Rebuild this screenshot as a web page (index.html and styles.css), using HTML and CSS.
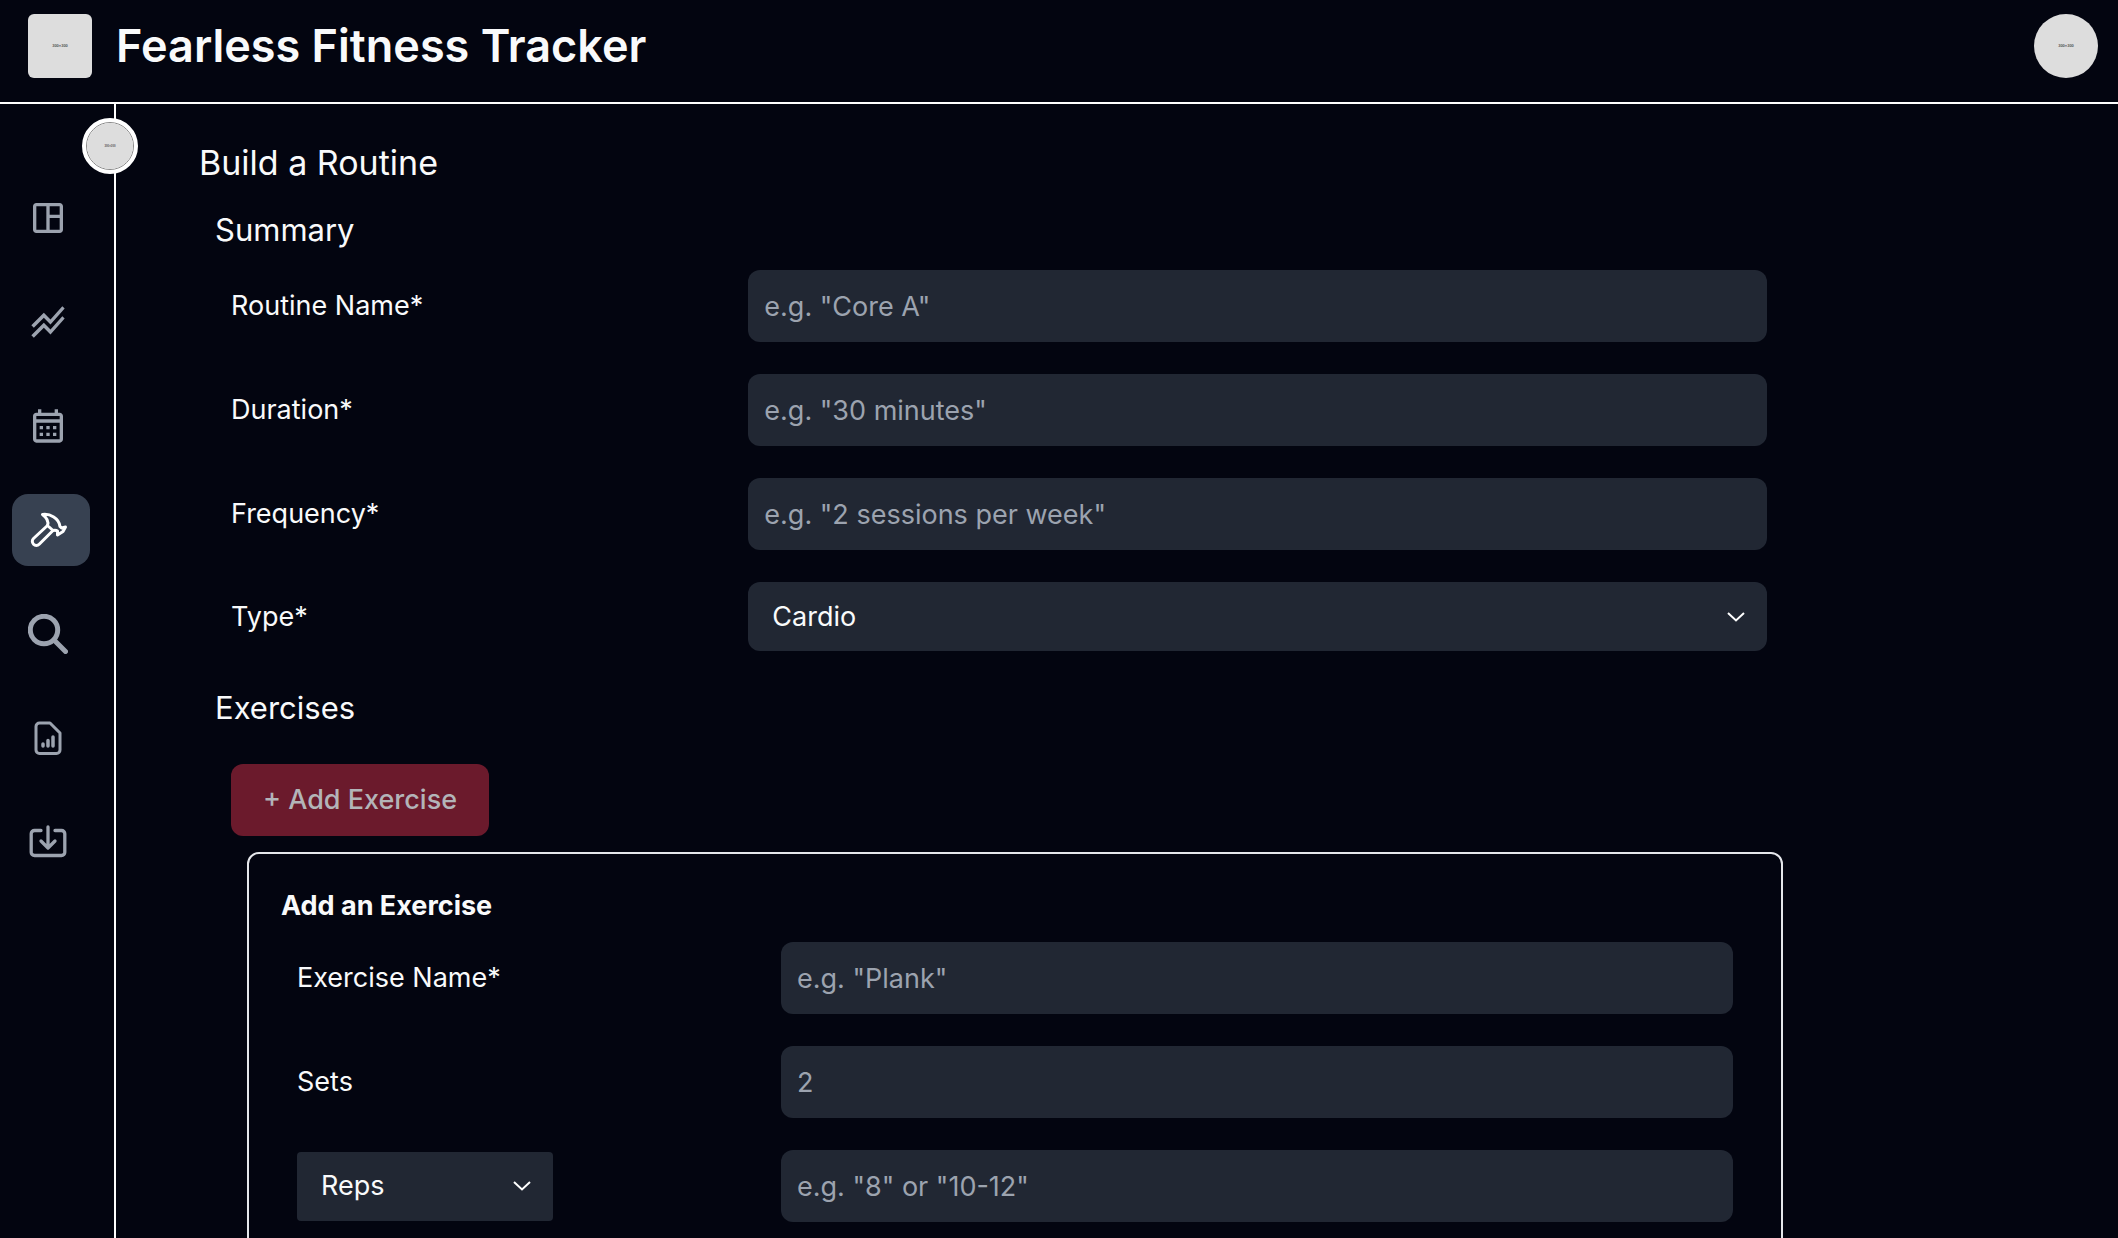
FILE: index.html
```html
<!DOCTYPE html>
<html lang="en">
<head>
<meta charset="utf-8">
<meta name="viewport" content="width=device-width, initial-scale=1">
<title>Fearless Fitness Tracker</title>
<link rel="stylesheet" href="styles.css">
</head>
<body>
<div class="app">
  <header class="header">
    <div class="brand">
      <svg class="thumb thumb-square" viewBox="0 0 64 64" aria-hidden="true"><rect width="64" height="64" fill="#ddd"/><text x="32" y="33" class="thumb-text">300×300</text></svg>
      <h1 class="brand-name">Fearless Fitness Tracker</h1>
    </div>
    <button class="avatar" type="button" aria-label="Account">
      <svg class="thumb thumb-round" viewBox="0 0 64 64" aria-hidden="true"><rect width="64" height="64" fill="#ddd"/><text x="32" y="33" class="thumb-text">300×300</text></svg>
    </button>
  </header>
  <div class="body">
    <aside class="sidebar">
      <button class="toggle" type="button" aria-label="Expand sidebar">
        <svg class="toggle-image" viewBox="0 0 64 64" aria-hidden="true"><rect width="64" height="64" fill="#ddd"/><text x="32" y="33" class="thumb-text">300×300</text></svg>
      </button>
      <nav class="nav">
        <a class="nav-item" href="#" aria-label="Dashboard"><svg class="icon" viewBox="0 0 24 24" fill="currentColor"><path d="M19 3H5c-1.100 0-2 .9-2 2v14c0 1.100.9 2 2 2h14c1.100 0 2-.9 2-2V5c0-1.100-.9-2-2-2zM5 19V5h6v14H5zm14 0h-6v-7h6v7zm0-9h-6V5h6v5z"/></svg></a>
        <a class="nav-item" href="#" aria-label="Progress"><svg class="icon" viewBox="0 0 24 24" fill="currentColor"><path d="M2 19.990l7.500-7.510 4 4 7.090-7.970L22 9.920l-8.500 9.560-4-4-6 6.010L2 19.990zm1.500-4.500l6-6.010 4 4L22 3.920l-1.410-1.410-7.090 7.970-4-4L2 13.990l1.500 1.500z"/></svg></a>
        <a class="nav-item" href="#" aria-label="Calendar"><svg class="icon" viewBox="0 0 24 24" fill="currentColor"><path d="M19 4h-1V2h-2v2H8V2H6v2H5c-1.110 0-1.990.9-1.990 2L3 20c0 1.100.89 2 2 2h14c1.100 0 2-.9 2-2V6c0-1.100-.9-2-2-2zm0 16H5V10h14v10zm0-12H5V6h14v2zM9 14H7v-2h2v2zm4 0h-2v-2h2v2zm4 0h-2v-2h2v2zm-8 4H7v-2h2v2zm4 0h-2v-2h2v2zm4 0h-2v-2h2v2z"/></svg></a>
        <a class="nav-item nav-item-active" href="#" aria-label="Build" aria-current="page"><svg class="icon" viewBox="0 0 40 40" fill="none" stroke="currentColor" stroke-width="3" stroke-linejoin="round" stroke-linecap="round"><path d="M19.500 15.500 5.500 28.500a4 4 0 0 0 5.700 5.700L25 20.500"/><path d="M14.500 4.500C22 3.500 31 8 32 16.500l1.500 1.500 4-1-2.500 4.500-5.500 3.500v-4c-1.500-1-3-.8-4.500-.5l-5.500-5c1.500-4.500-1-8-5-11z"/></svg></a>
        <a class="nav-item" href="#" aria-label="Search"><svg class="icon" viewBox="0 0 40 40" fill="none" stroke="currentColor" stroke-width="5" stroke-linecap="round"><circle cx="16" cy="16" r="13.700"/><path d="M26 26 37.500 37.500"/></svg></a>
        <a class="nav-item" href="#" aria-label="Reports"><svg class="icon" viewBox="0 0 40 40" fill="none" stroke="currentColor" stroke-width="3" stroke-linejoin="round" stroke-linecap="round"><path d="M11.500 5H22l10 10v17a3.500 3.500 0 0 1-3.500 3.500h-17A3.500 3.500 0 0 1 8 32V8.500A3.500 3.500 0 0 1 11.500 5z"/><path d="M15 26v2M20 22.500V28M25 19v9" stroke-width="3.500"/></svg></a>
        <a class="nav-item" href="#" aria-label="Download"><svg class="icon" viewBox="0 0 40 40" fill="none" stroke="currentColor" stroke-width="3.300" stroke-linejoin="round" stroke-linecap="round"><path d="M13 8.500H6.500A3.300 3.300 0 0 0 3.200 11.800v18.400a3.300 3.300 0 0 0 3.300 3.300h27a3.300 3.300 0 0 0 3.300-3.300V11.800a3.300 3.300 0 0 0-3.300-3.300H27M20 5v20.500M13 19l7 7 7-7"/></svg></a>
      </nav>
    </aside>
    <main class="main">
      <form class="routine">
        <h2 class="page-title">Build a Routine</h2>
        <section class="section">
          <h3 class="section-title">Summary</h3>
          <div class="rows">
            <div class="row"><label for="name">Routine Name*</label><input class="field" id="name" type="text" placeholder='e.g. "Core A"'></div>
            <div class="row"><label for="duration">Duration*</label><input class="field" id="duration" type="text" placeholder='e.g. "30 minutes"'></div>
            <div class="row"><label for="frequency">Frequency*</label><input class="field" id="frequency" type="text" placeholder='e.g. "2 sessions per week"'></div>
            <div class="row"><label for="type">Type*</label>
              <div class="select-wrap"><select class="select" id="type"><option>Cardio</option><option>Strength</option></select><svg class="chevron" viewBox="0 0 18 10" aria-hidden="true"><path d="M1 1l8 7.500L17 1"/></svg></div>
            </div>
          </div>
        </section>
        <section class="section section-exercises">
          <h3 class="section-title">Exercises</h3>
          <div class="exercises">
            <button class="add" type="button" disabled>+ Add Exercise</button>
            <div class="card">
              <h4 class="card-title">Add an Exercise</h4>
              <div class="rows">
                <div class="row"><label for="exercise">Exercise Name*</label><input class="field" id="exercise" type="text" placeholder='e.g. "Plank"'></div>
                <div class="row"><label for="sets">Sets</label><input class="field" id="sets" type="text" placeholder="2"></div>
                <div class="row">
                  <div class="select-wrap select-small"><select class="select" aria-label="Unit"><option>Reps</option><option>Time</option></select><svg class="chevron" viewBox="0 0 18 10" aria-hidden="true"><path d="M1 1l8 7.500L17 1"/></svg></div>
                  <input class="field" type="text" aria-label="Amount" placeholder='e.g. "8" or "10-12"'>
                </div>
              </div>
            </div>
          </div>
        </section>
      </form>
    </main>
  </div>
</div>
</body>
</html>
```
FILE: styles.css
```css
* { box-sizing: border-box; }

body {
  margin: 0;
  background: #030510;
  color: #f9fafb;
  font-family: Inter, "Liberation Sans", sans-serif;
  font-size: 27px;
  line-height: 40px;
}

h1, h2, h3, h4 { margin: 0; }

input, select, button { font: inherit; color: inherit; }

.app {
  display: flex;
  flex-direction: column;
  height: 100vh;
  overflow: hidden;
}

.header {
  display: flex;
  flex: none;
  justify-content: space-between;
  align-items: flex-start;
  padding: 14px 20px 24px 28px;
  border-bottom: 2px solid #fff;
}

.brand { display: flex; align-items: center; gap: 24px; }

.brand-name {
  font-size: 45px;
  line-height: 64px;
  font-weight: 600;
}

.thumb { display: block; width: 64px; height: 64px; }
.thumb-square { border-radius: 6px; }
.thumb-round { border-radius: 50%; }

.thumb-text {
  font: bold 4px "Liberation Sans", sans-serif;
  fill: #555;
  text-anchor: middle;
}

.avatar { padding: 0; border: 0; background: none; }

.body { display: flex; flex: 1; min-height: 0; }

.sidebar {
  position: relative;
  flex: none;
  width: 116px;
  padding: 78px 24px 0 12px;
  border-right: 2px solid #fff;
}

.toggle {
  position: absolute;
  top: 14px;
  right: -24px;
  width: 56px;
  height: 56px;
  padding: 0;
  border: 4px solid #fff;
  border-radius: 50%;
  background: #fff;
}

.toggle-image {
  display: block;
  width: 48px;
  height: 48px;
  border: 1px solid #888;
  border-radius: 50%;
}

.nav { display: flex; flex-direction: column; gap: 32px; }

.nav-item {
  display: flex;
  align-items: center;
  height: 72px;
  padding: 0 16px;
  border-radius: 16px;
  color: #9ca3af;
}

.nav-item-active { background: #374151; color: #fff; }

.icon { width: 40px; height: 40px; flex: none; }

.main { flex: 1; min-width: 0; padding: 34px 32px 0 83px; overflow: hidden; }

.routine { max-width: 1600px; }

.page-title { font-size: 34px; line-height: 50px; font-weight: 400; }

.section { padding: 14px 32px 0 16px; }
.section-exercises { padding-top: 29px; }

.section-title { font-size: 31px; line-height: 56px; font-weight: 400; }

.rows { display: flex; flex-direction: column; gap: 32px; padding: 12px 0 0 16px; }

.row {
  display: grid;
  grid-template-columns: 1fr 2fr;
  gap: 8px;
  align-items: center;
}

.field {
  width: 100%;
  height: 72px;
  padding: 0 16px;
  border: 0;
  border-radius: 12px;
  background: #212733;
}

.field::placeholder { color: #9ca3af; opacity: 1; }

.select-wrap { position: relative; }

.select {
  display: block;
  width: 100%;
  height: 69px;
  padding: 0 56px 0 24px;
  border: 0;
  border-radius: 12px;
  background: #212733;
  appearance: none;
}

.select-small { width: 256px; }
.select-small .select { border-radius: 4px; }

.chevron {
  position: absolute;
  top: 50%;
  right: 22px;
  width: 18px;
  height: 10px;
  margin-top: -5px;
  fill: none;
  stroke: #fff;
  stroke-width: 2;
  pointer-events: none;
}

.exercises { padding: 28px 0 0 16px; }

.add {
  display: block;
  height: 72px;
  padding: 0 32px;
  border: 0;
  border-radius: 12px;
  background: #6b1a2c;
  color: #b3b4b8;
  font-weight: 500;
}

.card {
  width: 100%;
  margin: 16px 0 0 16px;
  padding: 32px;
  border: 2px solid #e5e7eb;
  border-radius: 12px;
}

.card-title { font-size: 27px; line-height: 40px; font-weight: 700; }

.card .rows { padding: 16px 16px 0; }
```
